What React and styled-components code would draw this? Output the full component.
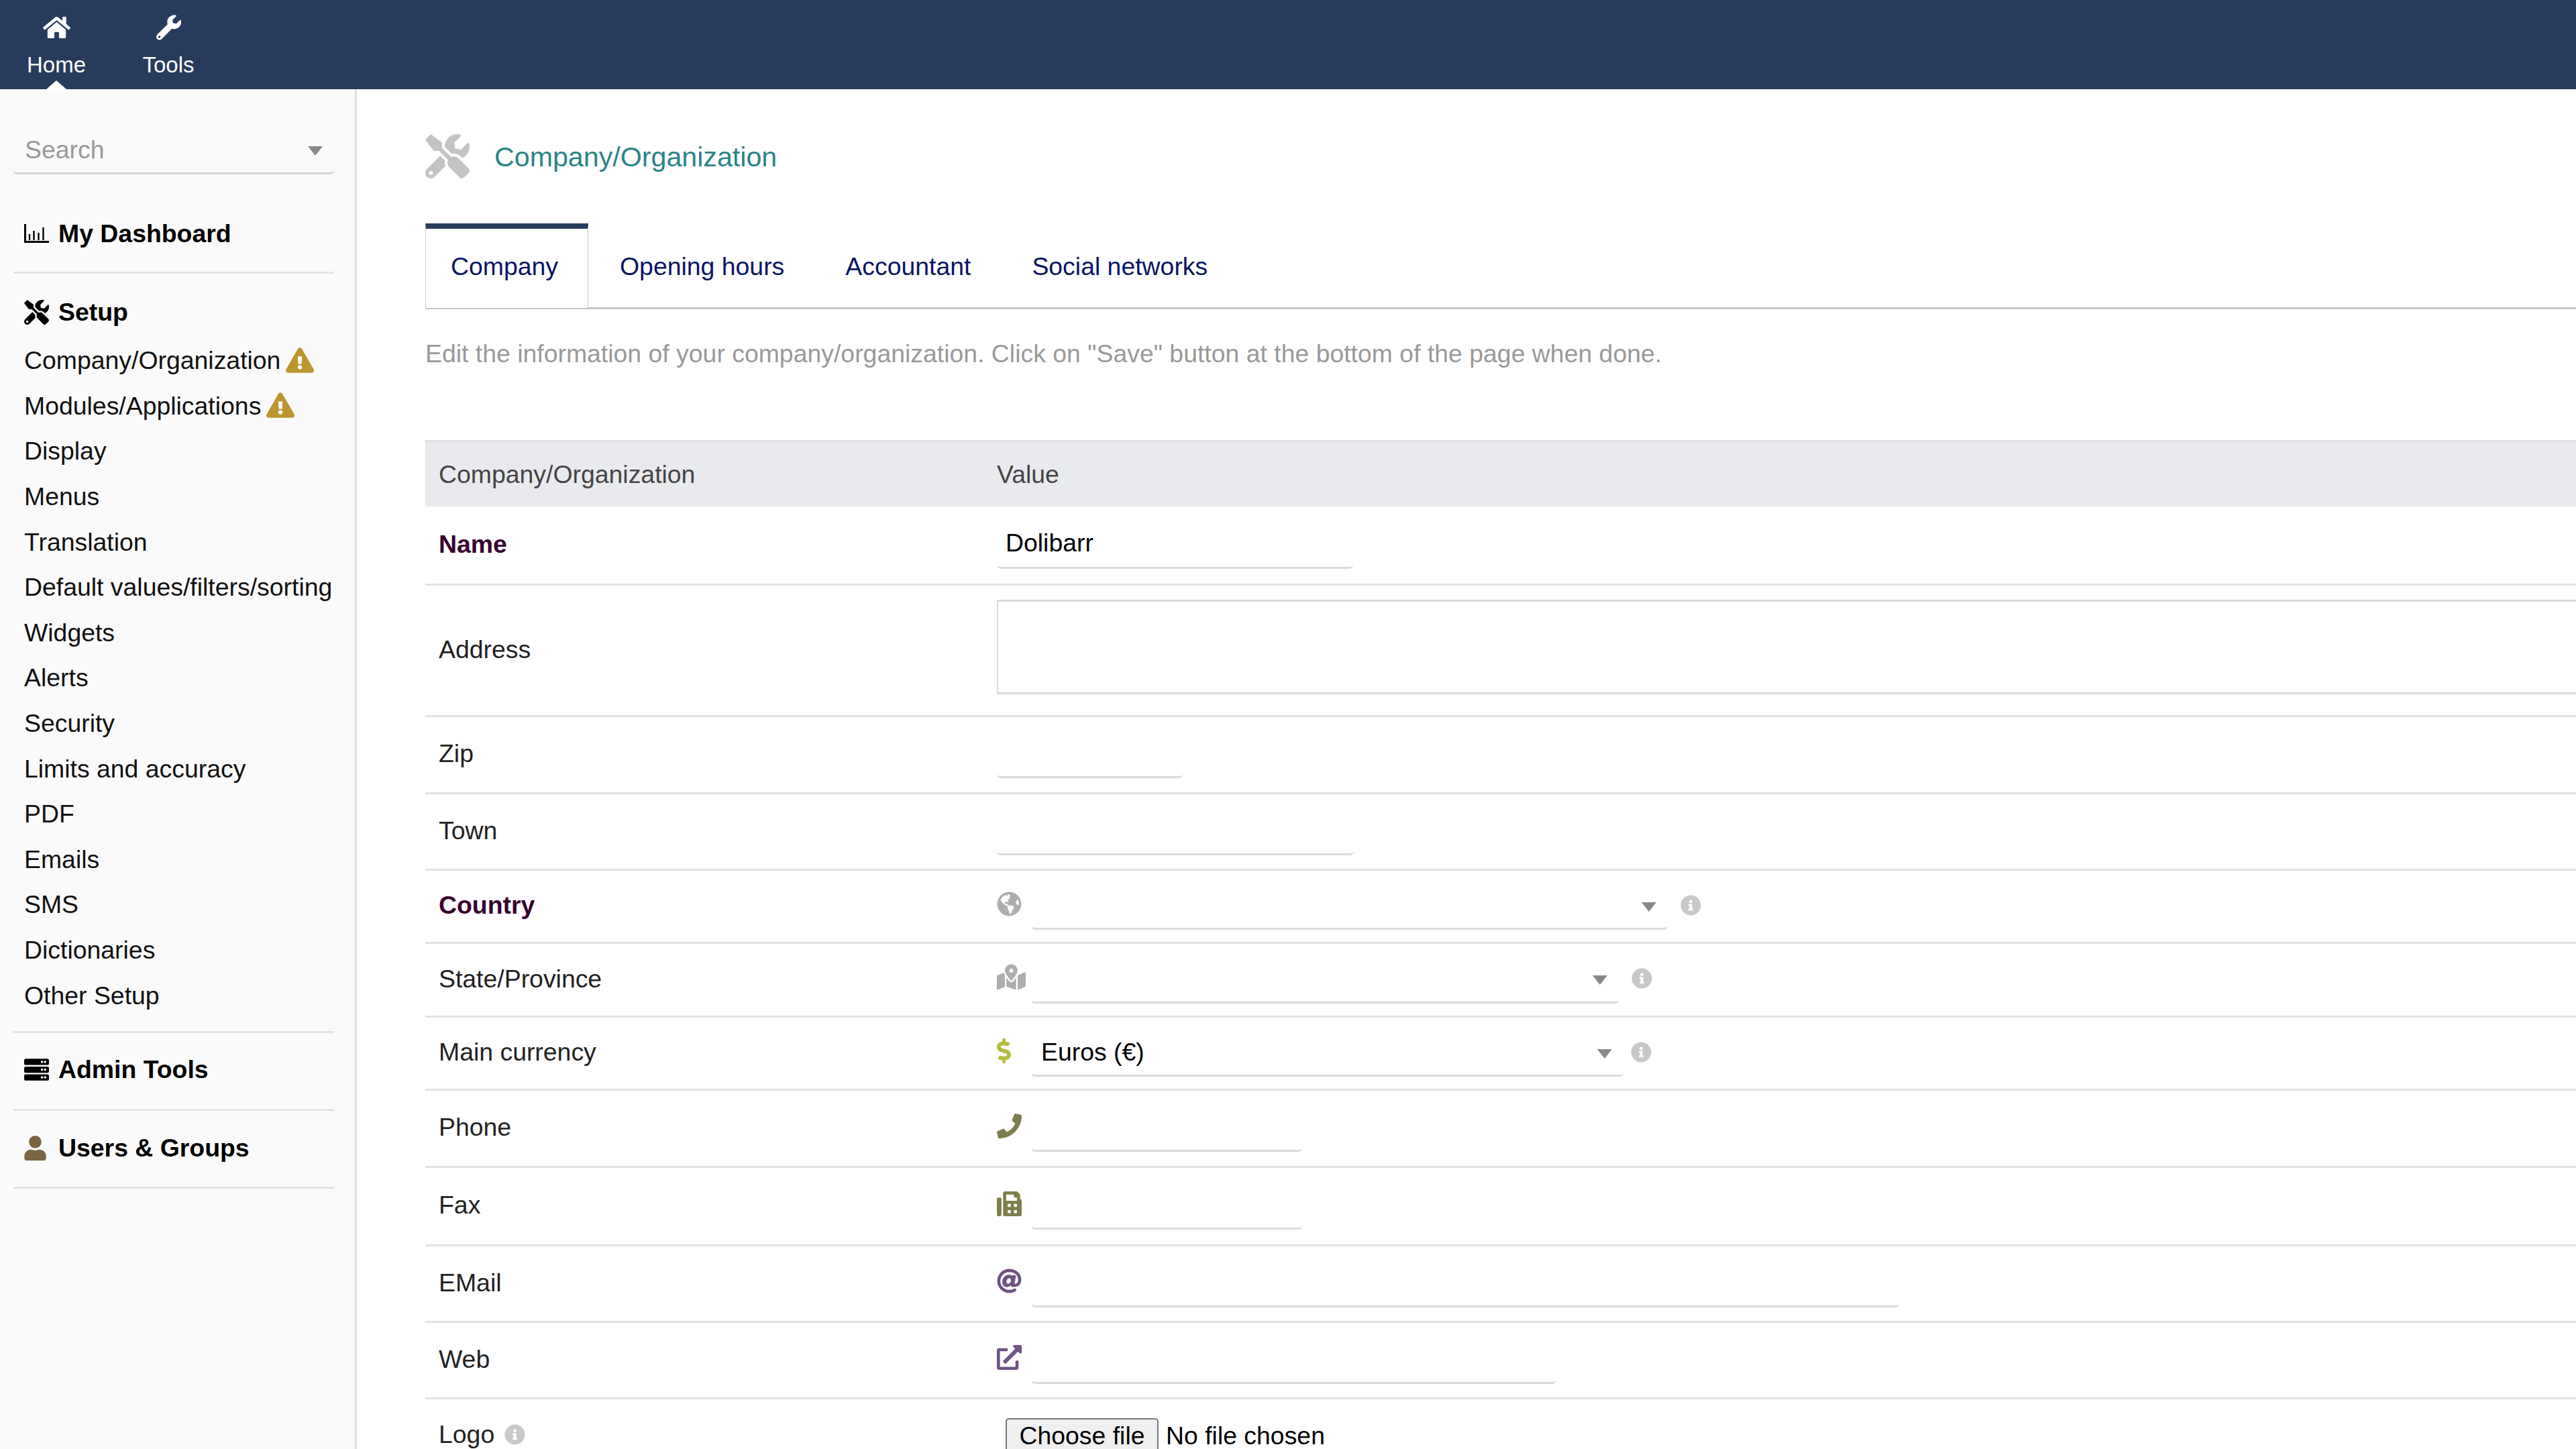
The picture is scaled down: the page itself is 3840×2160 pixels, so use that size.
import React from "react";
import styled, { createGlobalStyle } from "styled-components";
import {
  FaHome,
  FaWrench,
  FaTools,
  FaServer,
  FaUser,
  FaExclamationTriangle,
  FaGlobeAmericas,
  FaMapMarkedAlt,
  FaDollarSign,
  FaPhone,
  FaFax,
  FaAt,
  FaExternalLinkAlt,
  FaInfoCircle,
} from "react-icons/fa";

const GlobalStyle = createGlobalStyle`
  html, body {
    margin: 0;
    padding: 0;
    background: #fff;
    font-family: "Liberation Sans", Arial, sans-serif;
    font-size: 37.4px;
    color: #222;
  }
`;

const Page = styled.div`
  width: 3840px;
  height: 2160px;
  overflow: hidden;
  display: flex;
  flex-direction: column;
`;

const TopBar = styled.header`
  height: 133px;
  flex: none;
  display: flex;
  background: #273c5c;
  color: #fff;
`;

const TopItem = styled.a`
  position: relative;
  width: ${(p) => p.$w}px;
  display: flex;
  flex-direction: column;
  align-items: center;
  padding-top: 19px;
  box-sizing: border-box;
  font-size: 33px;
  line-height: 40px;
  svg {
    height: 44px;
    margin-bottom: 14px;
  }
`;

const ActiveMark = styled.span`
  position: absolute;
  left: 69px;
  bottom: 0;
  border-left: 15px solid transparent;
  border-right: 15px solid transparent;
  border-bottom: 13px solid #fff;
`;

const Body = styled.div`
  flex: 1;
  display: flex;
  min-height: 0;
`;

const Sidebar = styled.aside`
  width: 532px;
  flex: none;
  box-sizing: border-box;
  padding: 56px 31px 0 20px;
  background: #fafafa;
  border-right: 3px solid #e0e0e0;
`;

const SearchBox = styled.div`
  height: 71px;
  box-sizing: border-box;
  display: flex;
  align-items: center;
  justify-content: space-between;
  padding: 0 17px;
  color: #999;
  border-bottom: 3px solid #d4d4d4;
  border-radius: 6px;
`;

const Caret = styled.span`
  flex: none;
  margin-top: 4px;
  border-left: 11px solid transparent;
  border-right: 11px solid transparent;
  border-top: 14px solid #888;
`;

const MenuGroup = styled.div`
  padding: ${(p) => p.$top}px 0 ${(p) => p.$bottom}px;
  border-bottom: 3px solid #e2e2e2;
`;

const MenuHeader = styled.div`
  height: 62px;
  display: flex;
  align-items: center;
  padding-left: 16px;
  font-weight: 700;
  color: #000;
`;

const HeaderIconSlot = styled.span`
  width: 51px;
  flex: none;
  display: flex;
  align-items: center;
  color: ${(p) => p.$color || "#000"};
  svg {
    margin-left: ${(p) => p.$shift || 0}px;
  }
`;

const MenuList = styled.div`
  padding-top: 8px;
`;

const MenuItem = styled.div`
  height: 67.6px;
  display: flex;
  align-items: center;
  padding-left: 16px;
  color: #111;
  white-space: nowrap;
  svg {
    margin-left: 8px;
    margin-bottom: 2px;
    color: #bd952f;
  }
`;

const Main = styled.main`
  flex: 1;
  min-width: 0;
  padding-left: 102px;
  overflow: hidden;
`;

const TitleRow = styled.div`
  height: 200px;
  display: flex;
  align-items: center;
  color: #c4c4c4;
  svg {
    flex: none;
    margin-right: 37px;
  }
`;

const Title = styled.h1`
  margin: 2px 0 0;
  font-size: 41.2px;
  font-weight: 400;
  color: #2b8486;
`;

const Tabs = styled.nav`
  height: 128px;
  box-sizing: border-box;
  display: flex;
  border-bottom: 3px solid #c4c4c4;
`;

const Tab = styled.a`
  display: flex;
  align-items: center;
  padding: 3px 45.5px 0;
  color: #0a1464;
`;

const ActiveTab = styled(Tab)`
  width: 243px;
  box-sizing: border-box;
  padding: 0 0 5px 37px;
  margin-right: 1.5px;
  margin-bottom: -1px;
  background: #fff;
  border-left: 1px solid #ccc;
  border-right: 1px solid #ccc;
  border-top: 8px solid #273c5c;
`;

const Intro = styled.p`
  margin: 0;
  height: 195px;
  padding-top: 45px;
  box-sizing: border-box;
  line-height: 42px;
  color: #999;
`;

const HeadRow = styled.div`
  height: 99px;
  box-sizing: border-box;
  display: grid;
  grid-template-columns: 852px 1fr;
  align-items: center;
  padding-top: 1px;
  background: #e9eaed;
  border-top: 3px solid #dedfe2;
  color: #444;
`;

const HeadLabel = styled.div`
  padding-left: 20px;
`;

const Row = styled.div`
  height: ${(p) => p.$h}px;
  box-sizing: border-box;
  display: grid;
  grid-template-columns: 852px 1fr;
  align-items: center;
  border-bottom: ${(p) => (p.$last ? "none" : "3px solid #e2e2e2")};
`;

const Label = styled.div`
  padding: 0 0 3px 20px;
  display: flex;
  align-items: center;
  font-weight: ${(p) => (p.$required ? 700 : 400)};
  color: ${(p) => (p.$required ? "#36002e" : "#222")};
  svg {
    margin-left: 15px;
    color: #c8c8c8;
  }
`;

const Value = styled.div`
  display: flex;
  align-items: center;
`;

const IconSlot = styled.span`
  width: 51px;
  flex: none;
  display: flex;
  margin-bottom: 8px;
  color: ${(p) => p.$color};
  svg {
    margin-left: ${(p) => p.$shift || 0}px;
  }
`;

const Field = styled.div`
  width: ${(p) => p.$w}px;
  height: 70px;
  flex: none;
  box-sizing: border-box;
  display: flex;
  align-items: center;
  justify-content: space-between;
  padding: ${(p) => (p.$select ? "0 17px 0 15px" : "0 13px 3px")};
  color: #000;
  border-bottom: 3px solid #dbdbdb;
  border-radius: 6px;
`;

const AddressBox = styled.div`
  width: 2400px;
  height: 141px;
  margin-bottom: 11px;
  box-sizing: border-box;
  background: #fff;
  border: 2px solid #dbdbdb;
  border-bottom-width: 3px;
  border-top-width: 3px;
`;

const Hint = styled.span`
  margin-left: ${(p) => p.$gap || 19}px;
  margin-bottom: 4px;
  display: flex;
  color: #c8c8c8;
`;

const FilePicker = styled.div`
  display: flex;
  align-items: center;
  padding-left: 13px;
  color: #000;
`;

const FileButton = styled.button`
  width: 228px;
  height: 52px;
  padding: 0;
  margin-right: 11px;
  font: inherit;
  color: #000;
  background: #efefef;
  border: 2px solid #767676;
  border-radius: 5px;
  display: block;
`;

const setupLinks = [
  { name: "Company/Organization", warn: true },
  { name: "Modules/Applications", warn: true },
  { name: "Display" },
  { name: "Menus" },
  { name: "Translation" },
  { name: "Default values/filters/sorting" },
  { name: "Widgets" },
  { name: "Alerts" },
  { name: "Security" },
  { name: "Limits and accuracy" },
  { name: "PDF" },
  { name: "Emails" },
  { name: "SMS" },
  { name: "Dictionaries" },
  { name: "Other Setup" },
];

const DashboardIcon = () => (
  <svg width="37" height="28" viewBox="0 0 37 28" fill="none" stroke="#000">
    <path d="M1.5 0V26.5H37" strokeWidth="3" />
    <path d="M8 24V15M14.5 24V10M21.5 24V13M28.5 24V5" strokeWidth="2.4" />
  </svg>
);

const App = () => {
  return (
    <Page>
      <GlobalStyle />
      <TopBar>
        <TopItem $w={168}>
          <FaHome size={41} />
          Home
          <ActiveMark />
        </TopItem>
        <TopItem $w={166}>
          <FaWrench size={37} />
          Tools
        </TopItem>
      </TopBar>
      <Body>
        <Sidebar>
          <SearchBox>
            Search
            <Caret />
          </SearchBox>
          <MenuGroup $top={57} $bottom={26}>
            <MenuHeader>
              <HeaderIconSlot>
                <DashboardIcon />
              </HeaderIconSlot>
              My Dashboard
            </MenuHeader>
          </MenuGroup>
          <MenuGroup $top={26} $bottom={19}>
            <MenuHeader>
              <HeaderIconSlot>
                <FaTools size={37} />
              </HeaderIconSlot>
              Setup
            </MenuHeader>
            <MenuList>
              {setupLinks.map((link) => (
                <MenuItem key={link.name}>
                  {link.name}
                  {link.warn && <FaExclamationTriangle size={42} />}
                </MenuItem>
              ))}
            </MenuList>
          </MenuGroup>
          <MenuGroup $top={24} $bottom={27}>
            <MenuHeader>
              <HeaderIconSlot>
                <FaServer size={37} />
              </HeaderIconSlot>
              Admin Tools
            </MenuHeader>
          </MenuGroup>
          <MenuGroup $top={25} $bottom={26}>
            <MenuHeader>
              <HeaderIconSlot $color="#7a6540" $shift={-2}>
                <FaUser size={37} />
              </HeaderIconSlot>
              Users &amp; Groups
            </MenuHeader>
          </MenuGroup>
        </Sidebar>
        <Main>
          <TitleRow>
            <FaTools size={66} />
            <Title>Company/Organization</Title>
          </TitleRow>
          <Tabs>
            <ActiveTab>Company</ActiveTab>
            <Tab>Opening hours</Tab>
            <Tab>Accountant</Tab>
            <Tab>Social networks</Tab>
          </Tabs>
          <Intro>
            Edit the information of your company/organization. Click on "Save" button at the bottom
            of the page when done.
          </Intro>
          <HeadRow>
            <HeadLabel>Company/Organization</HeadLabel>
            <div>Value</div>
          </HeadRow>
          <Row $h={118}>
            <Label $required>Name</Label>
            <Value>
              <Field $w={531}>Dolibarr</Field>
            </Value>
          </Row>
          <Row $h={196}>
            <Label>Address</Label>
            <Value>
              <AddressBox />
            </Value>
          </Row>
          <Row $h={115}>
            <Label>Zip</Label>
            <Value>
              <Field $w={277} />
            </Value>
          </Row>
          <Row $h={114}>
            <Label>Town</Label>
            <Value>
              <Field $w={532} />
            </Value>
          </Row>
          <Row $h={109}>
            <Label $required>Country</Label>
            <Value>
              <IconSlot $color="#adadad">
                <FaGlobeAmericas size={37} />
              </IconSlot>
              <Field $w={949} $select>
                <span />
                <Caret />
              </Field>
              <Hint>
                <FaInfoCircle size={31} />
              </Hint>
            </Value>
          </Row>
          <Row $h={110}>
            <Label>State/Province</Label>
            <Value>
              <IconSlot $color="#adadad">
                <FaMapMarkedAlt size={43} />
              </IconSlot>
              <Field $w={876} $select>
                <span />
                <Caret />
              </Field>
              <Hint>
                <FaInfoCircle size={31} />
              </Hint>
            </Value>
          </Row>
          <Row $h={109}>
            <Label>Main currency</Label>
            <Value>
              <IconSlot $color="#b3bc3c" $shift={-8}>
                <FaDollarSign size={37} />
              </IconSlot>
              <Field $w={883} $select>
                Euros (€)
                <Caret />
              </Field>
              <Hint $gap={11}>
                <FaInfoCircle size={31} />
              </Hint>
            </Value>
          </Row>
          <Row $h={115}>
            <Label>Phone</Label>
            <Value>
              <IconSlot $color="#7d7e4b">
                <FaPhone size={37} />
              </IconSlot>
              <Field $w={404} />
            </Value>
          </Row>
          <Row $h={117}>
            <Label>Fax</Label>
            <Value>
              <IconSlot $color="#7d7e4b">
                <FaFax size={37} />
              </IconSlot>
              <Field $w={404} />
            </Value>
          </Row>
          <Row $h={114}>
            <Label>EMail</Label>
            <Value>
              <IconSlot $color="#6f5382">
                <FaAt size={37} />
              </IconSlot>
              <Field $w={1294} />
            </Value>
          </Row>
          <Row $h={114}>
            <Label>Web</Label>
            <Value>
              <IconSlot $color="#6f5382">
                <FaExternalLinkAlt size={37} />
              </IconSlot>
              <Field $w={783} />
            </Value>
          </Row>
          <Row $h={108} $last>
            <Label>
              Logo
              <FaInfoCircle size={31} />
            </Label>
            <FilePicker>
              <FileButton type="button">Choose file</FileButton>
              No file chosen
            </FilePicker>
          </Row>
        </Main>
      </Body>
    </Page>
  );
};

export default App;
